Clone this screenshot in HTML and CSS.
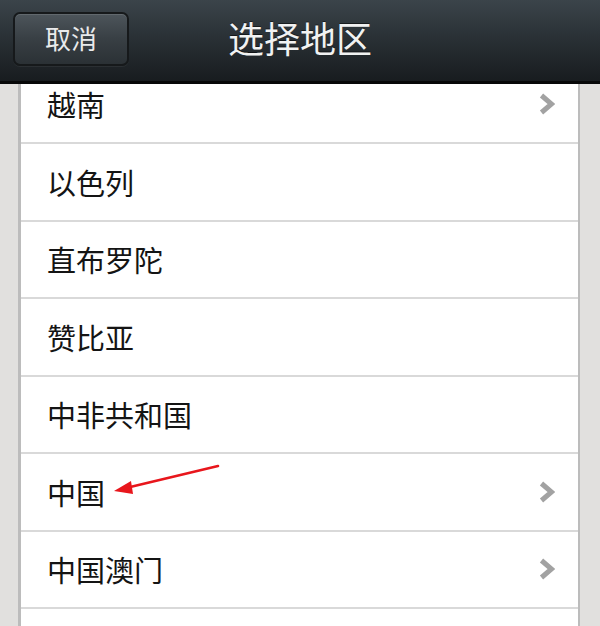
FILE: index.html
```html
<!DOCTYPE html>
<html lang="zh">
<head>
<meta charset="utf-8">
<title>选择地区</title>
<link rel="stylesheet" href="styles.css">
</head>
<body>
<div class="screen">
  <header class="topbar">
    <button class="btn">取消</button>
    <h1 class="title">选择地区</h1>
    <span></span>
  </header>
  <div class="viewport">
    <ul class="list">
      <li class="row"><span>越南</span><svg class="chev" viewBox="0 0 16 22" width="16" height="22"><polyline points="2.5,2.5 12.5,11 2.5,19.5"/></svg></li>
      <li class="row"><span>以色列</span></li>
      <li class="row"><span>直布罗陀</span></li>
      <li class="row"><span>赞比亚</span></li>
      <li class="row"><span>中非共和国</span></li>
      <li class="row"><span>中国</span><svg class="chev" viewBox="0 0 16 22" width="16" height="22"><polyline points="2.5,2.5 12.5,11 2.5,19.5"/></svg></li>
      <li class="row"><span>中国澳门</span><svg class="chev" viewBox="0 0 16 22" width="16" height="22"><polyline points="2.5,2.5 12.5,11 2.5,19.5"/></svg></li>
      <li class="row"><span></span></li>
    </ul>
  </div>
  <svg class="annot" viewBox="0 0 600 626" width="600" height="626">
    <line x1="218" y1="466" x2="126" y2="488" stroke="#e8161c" stroke-width="2.6" stroke-linecap="round"/>
    <polygon points="114,491 131,481 133,494" fill="#e8161c"/>
  </svg>
</div>
</body>
</html>
```

FILE: styles.css
```css
* { box-sizing: border-box; }
html, body { margin: 0; padding: 0; }
body {
  background: #e1e0de;
  font-family: "Noto Sans CJK SC", "Noto Sans", sans-serif;
}
.screen {
  position: relative;
  width: 600px;
  height: 626px;
  overflow: hidden;
  display: flex;
  flex-direction: column;
  background: #e1e0de;
}
.topbar {
  flex: none;
  height: 84px;
  display: grid;
  grid-template-columns: 1fr auto 1fr;
  align-items: center;
  padding: 0 13px 3px 13px;
  background: linear-gradient(#3b444a 0%, #2a3136 45%, #181c1f 100%);
  border-bottom: 3px solid #070808;
}
.btn {
  justify-self: start;
  width: 116px;
  height: 54px;
  border: 2px solid #16191b;
  border-radius: 7px;
  background: linear-gradient(#4d555b 0%, #383f44 50%, #2b3135 100%);
  box-shadow: inset 0 1px 0 rgba(255,255,255,0.12), 0 1px 0 rgba(255,255,255,0.06);
  color: #e9eaeb;
  font-family: "Noto Sans CJK SC", sans-serif;
  font-size: 26px;
  line-height: 1;
  padding: 0 0 2px;
}
.title {
  margin: 0;
  color: #f1f2f2;
  font-size: 36px;
  font-weight: 400;
  line-height: 1;
  padding-bottom: 4px;
  text-shadow: 0 -1px 0 rgba(0,0,0,0.5);
}
.viewport {
  flex: 1;
  overflow: hidden;
  margin: 0 20px 0 18px;
  background: #fff;
  border-left: 3px solid #bcbcbc;
  border-right: 2px solid #bcbcbc;
}
.list {
  list-style: none;
  margin: -17.5px 0 0;
  padding: 0;
}
.row {
  height: 77.5px;
  border-bottom: 2px solid #d9d9d9;
  display: flex;
  align-items: center;
  justify-content: space-between;
  padding: 0 23px 0 26px;
  font-size: 29px;
  color: #141414;
}
.chev {
  fill: none;
  stroke: #a2a2a2;
  stroke-width: 5;
  stroke-linejoin: miter;
}
.annot {
  position: absolute;
  left: 0;
  top: 0;
  pointer-events: none;
}
```
